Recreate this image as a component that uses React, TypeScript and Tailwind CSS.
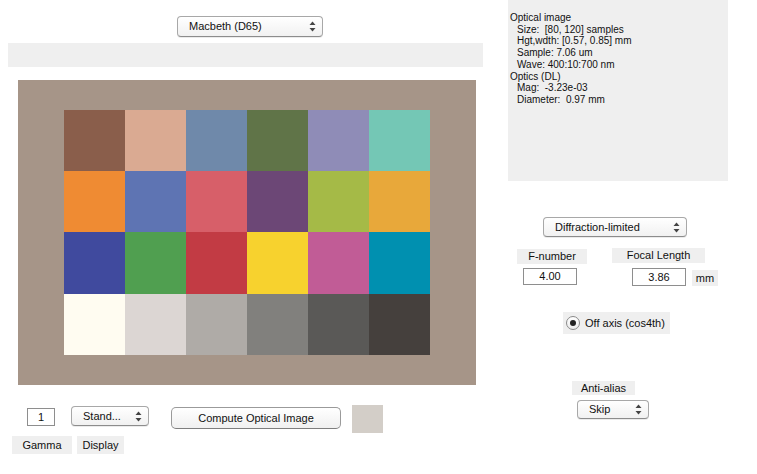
import React from "react";

const chart = [
  ["#8a5e4b", "#daaa92", "#6f89aa", "#607448", "#8f8cb7", "#74c7b5"],
  ["#ef8b33", "#5e74b3", "#d75f69", "#6c4776", "#a5ba47", "#e8a83a"],
  ["#404a9e", "#509f50", "#c23b44", "#f7d22e", "#c15c96", "#0090b0"],
  ["#fffcf1", "#dcd6d3", "#afaba7", "#81807d", "#5a5957", "#45403d"],
];

const Arrows = () => (
  <svg width="7" height="11" viewBox="0 0 7 11" className="shrink-0">
    <path d="M3.5 0.5 L6.5 4 L0.5 4 Z" fill="#444" />
    <path d="M3.5 10.5 L6.5 7 L0.5 7 Z" fill="#444" />
  </svg>
);

interface PopupProps {
  label: string;
  className: string;
}

const Popup = ({ label, className }: PopupProps) => (
  <div
    className={`flex items-center justify-between rounded-[4px] border border-[#a8a8a8] border-b-[#8c8c8c] bg-gradient-to-b from-white to-[#f1f1f1] shadow-[0_1px_0_rgba(0,0,0,0.08)] pl-[11px] pr-[6px] text-[11px] text-[#111] ${className}`}
  >
    <span>{label}</span>
    <Arrows />
  </div>
);

const Label = ({ text, className }: { text: string; className: string }) => (
  <div className={`flex items-center justify-center bg-[#efefef] text-[11px] text-[#111] ${className}`}>
    {text}
  </div>
);

const Field = ({ value, className }: { value: string; className: string }) => (
  <div className={`flex items-center justify-center border border-[#8e8e8e] bg-white text-[11px] text-[#111] ${className}`}>
    {value}
  </div>
);

const info = [
  { t: "Optical image", i: false },
  { t: "Size:  [80, 120] samples", i: true },
  { t: "Hgt,wdth: [0.57, 0.85] mm", i: true },
  { t: "Sample: 7.06 um", i: true },
  { t: "Wave: 400:10:700 nm", i: true },
  { t: "Optics (DL)", i: false },
  { t: "Mag:  -3.23e-03", i: true },
  { t: "Diameter:  0.97 mm", i: true },
];

export default function App() {
  return (
    <div
      className="flex w-[757px] h-[474px] bg-white overflow-hidden"
      style={{ fontFamily: '"Liberation Sans", Arial, sans-serif' }}
    >
      <div className="flex flex-col w-[500px] shrink-0">
        <Popup label="Macbeth (D65)" className="mt-[16px] ml-[177px] w-[146px] h-[21px]" />
        <div className="mt-[6px] ml-[8px] w-[475px] h-[24px] bg-[#efefef]" />
        <div className="mt-[13px] ml-[18px] w-[458px] h-[305px] bg-[#a69588] pl-[46px] pt-[30px]">
          <div className="grid grid-cols-[repeat(6,61px)] grid-rows-[61px_61px_62px_61px]">
            {chart.flat().map((c, i) => (
              <div key={i} style={{ backgroundColor: c }} />
            ))}
          </div>
        </div>
        <div className="mt-[20px] flex items-start">
          <Field value="1" className="ml-[27px] mt-[3px] w-[28px] h-[18px]" />
          <Popup label="Stand..." className="ml-[16px] mt-[1px] w-[78px] h-[20px]" />
          <div className="ml-[22px] mt-[2px] w-[170px] h-[22px] flex items-center justify-center rounded-[5px] border border-[#9a9a9a] border-b-[#7e7e7e] bg-gradient-to-b from-white to-[#f0f0f0] text-[11px] text-[#111]">
            Compute Optical Image
          </div>
          <div className="ml-[11px] w-[31px] h-[28px] bg-[#d3cec8]" />
        </div>
        <div className="mt-[3px] flex">
          <Label text="Gamma" className="ml-[12px] w-[60px] h-[18px]" />
          <Label text="Display" className="ml-[5px] w-[47px] h-[18px]" />
        </div>
      </div>

      <div className="flex flex-col ml-[8px]">
        <div className="w-[220px] h-[181px] bg-[#efefef] pt-[12px] pl-[2px] text-[10px] leading-[11.7px] text-[#111]">
          {info.map((l, i) => (
            <div key={i} className={l.i ? "pl-[7px] whitespace-pre" : "whitespace-pre"}>
              {l.t}
            </div>
          ))}
        </div>
        <Popup label="Diffraction-limited" className="mt-[36px] ml-[35px] w-[144px] h-[20px]" />
        <div className="mt-[11px] flex items-start">
          <Label text="F-number" className="ml-[9px] mt-[1px] w-[70px] h-[15px]" />
          <Label text="Focal Length" className="ml-[25px] w-[93px] h-[15px]" />
        </div>
        <div className="mt-[4px] flex items-start">
          <Field value="4.00" className="ml-[15px] w-[54px] h-[17px]" />
          <Field value="3.86" className="ml-[55px] w-[54px] h-[18px]" />
          <Label text="mm" className="ml-[6px] mt-[2px] w-[26px] h-[16px]" />
        </div>
        <div className="mt-[26px] ml-[55px] w-[107px] h-[22px] bg-[#efefef] flex items-center pl-[3px] gap-[5px] text-[11px] text-[#111]">
          <div className="w-[14px] h-[14px] rounded-full border border-[#8a8a8a] bg-gradient-to-b from-white to-[#ececec] flex items-center justify-center">
            <div className="w-[6px] h-[6px] rounded-full bg-[#222]" />
          </div>
          <span>Off axis (cos4th)</span>
        </div>
        <Label text="Anti-alias" className="mt-[47px] ml-[64px] w-[63px] h-[14px]" />
        <Popup label="Skip" className="mt-[5px] ml-[69px] w-[72px] h-[19px]" />
      </div>
    </div>
  );
}
